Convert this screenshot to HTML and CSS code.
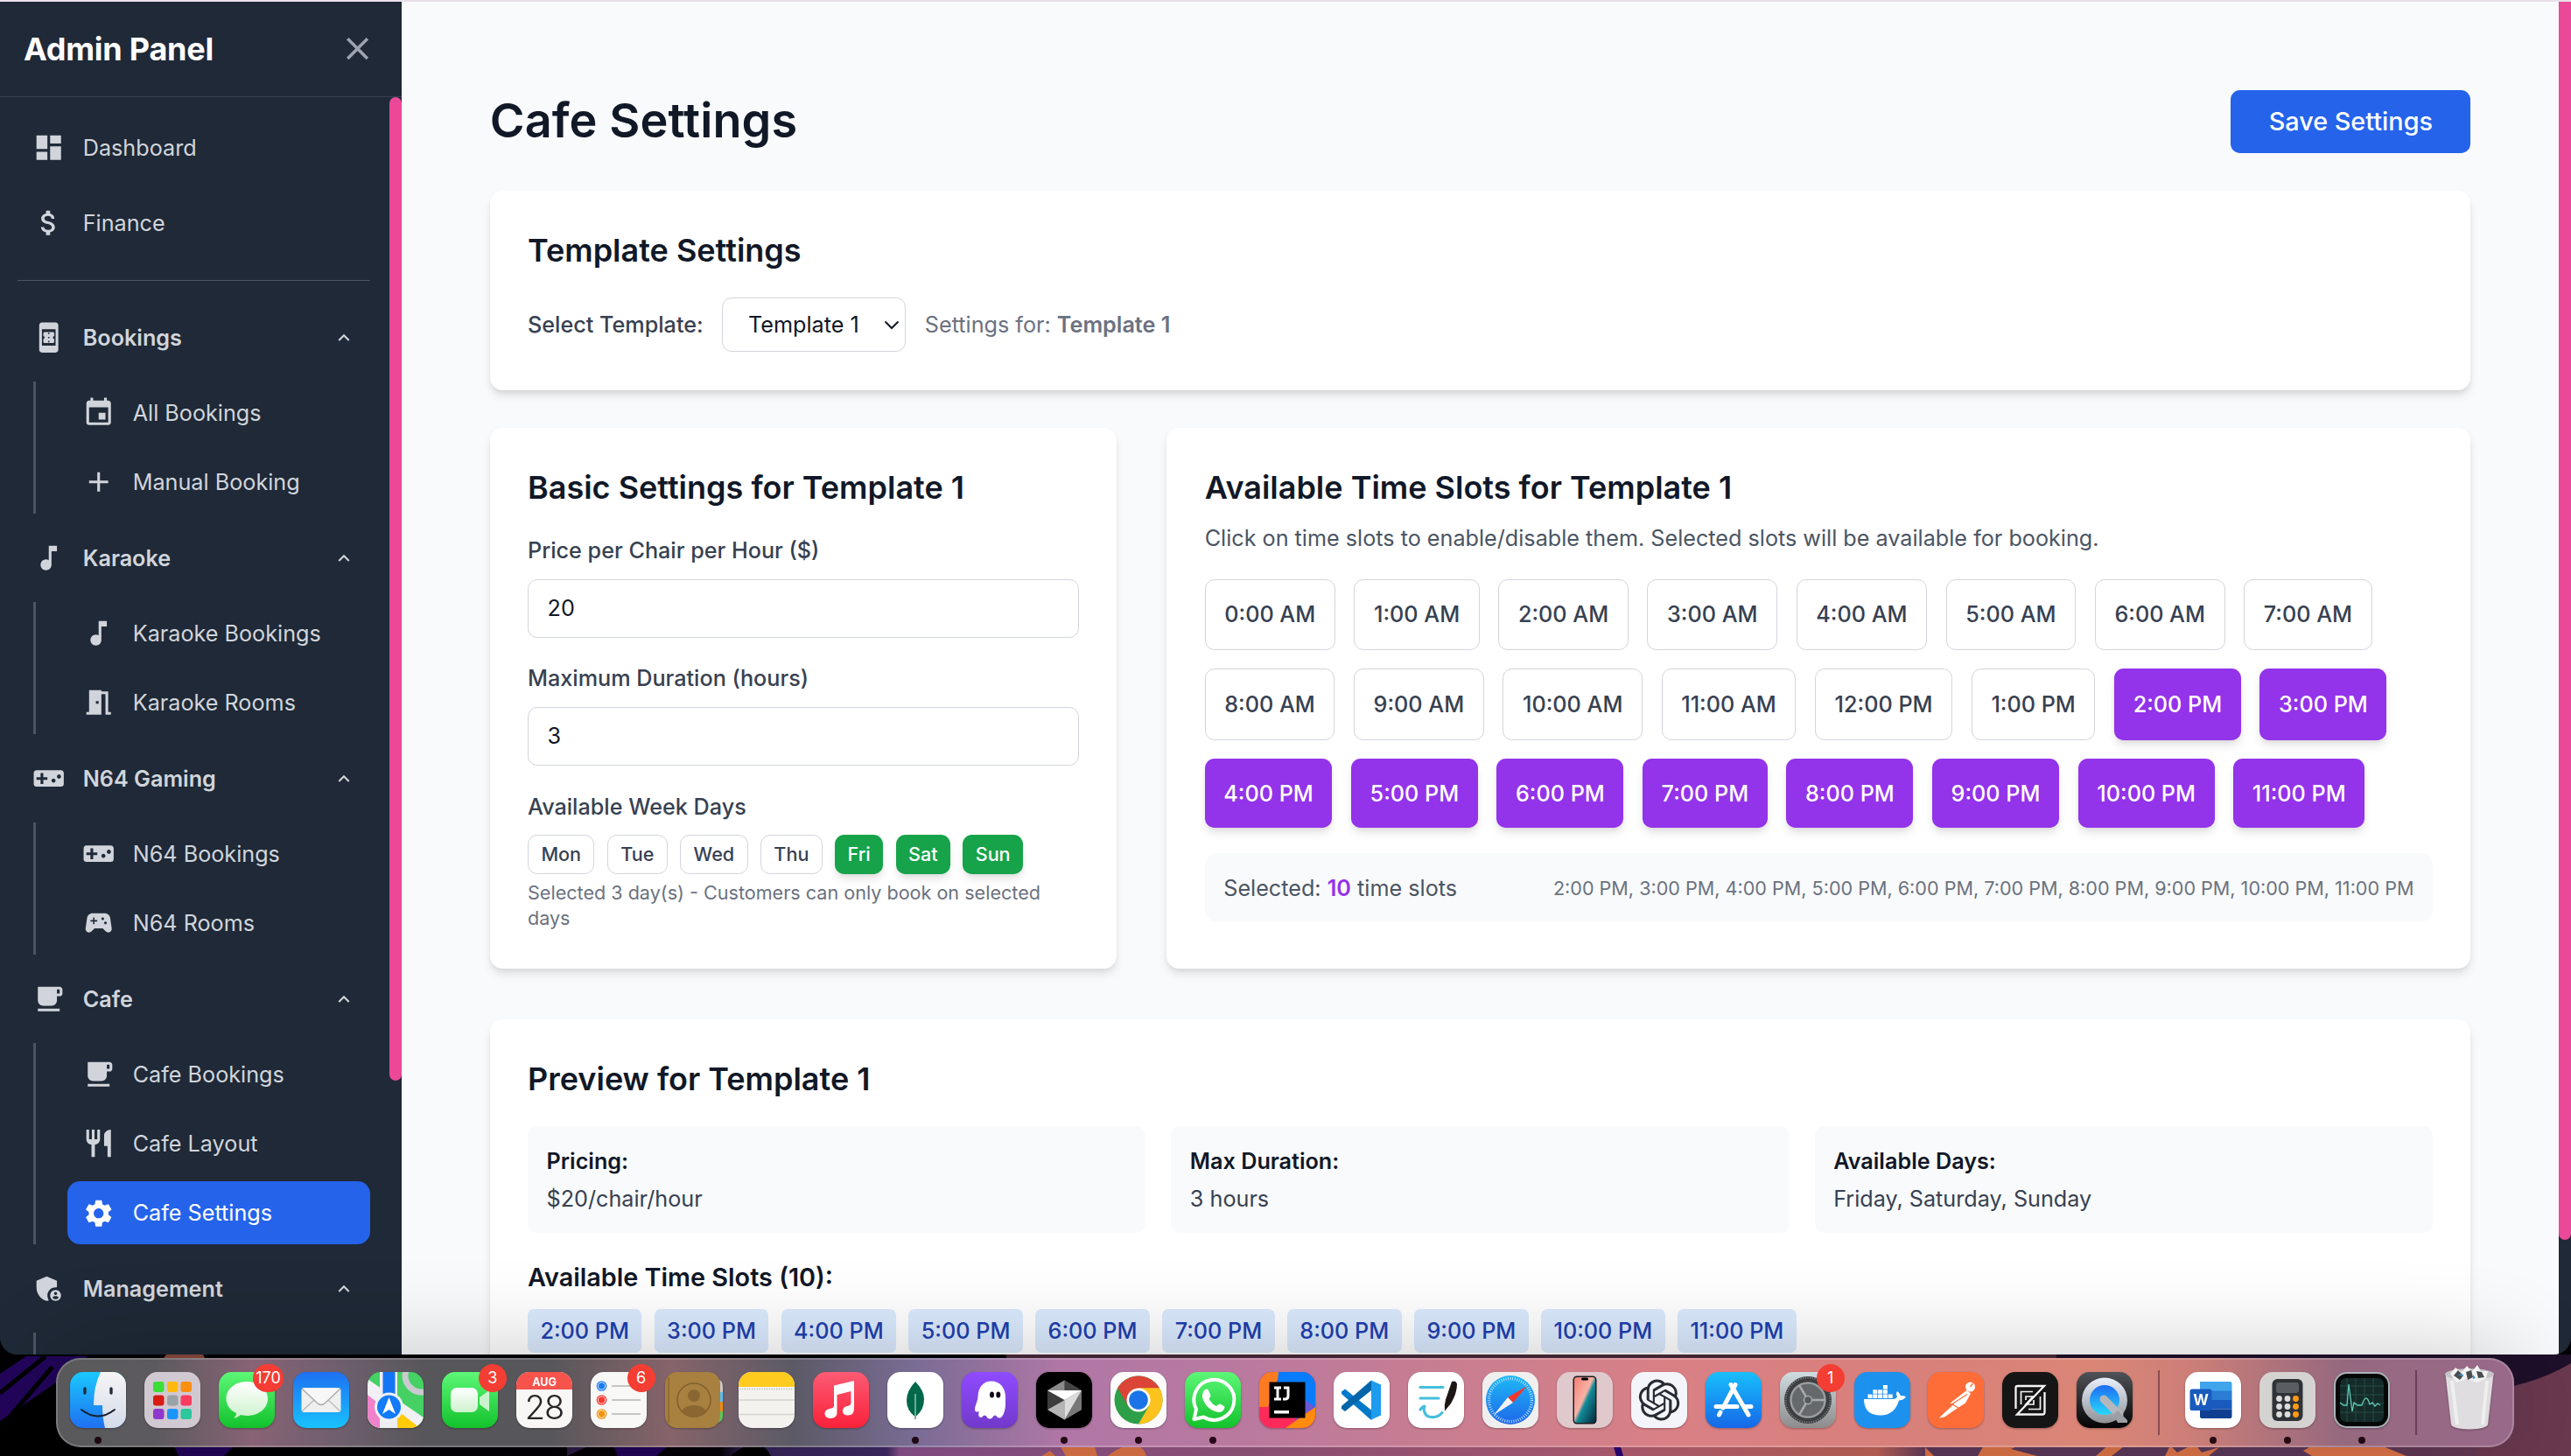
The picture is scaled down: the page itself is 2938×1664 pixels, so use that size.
FILE: index.html
```html
<!DOCTYPE html>
<html lang="en">
<head>
<meta charset="utf-8">
<title>Admin Panel - Cafe Settings</title>
<link rel="stylesheet" href="styles.css">
</head>
<body>
<svg class="defs" width="0" height="0" aria-hidden="true">
  <symbol id="i-dashboard" viewBox="0 0 24 24"><path d="M3 13h8V3H3v10zm0 8h8v-6H3v6zm10 0h8V11h-8v10zm0-18v6h8V3h-8z"/></symbol>
  <symbol id="i-money" viewBox="0 0 24 24"><path d="M11.8 10.9c-2.27-.59-3-1.2-3-2.15 0-1.09 1.01-1.85 2.7-1.85 1.78 0 2.44.85 2.5 2.1h2.21c-.07-1.72-1.12-3.3-3.21-3.81V3h-3v2.16c-1.94.42-3.5 1.68-3.5 3.61 0 2.31 1.91 3.46 4.7 4.13 2.5.6 3 1.48 3 2.41 0 .69-.49 1.79-2.7 1.79-2.06 0-2.87-.92-2.98-2.1h-2.2c.12 2.19 1.76 3.42 3.68 3.83V21h3v-2.15c1.95-.37 3.5-1.5 3.5-3.55 0-2.84-2.43-3.81-4.7-4.4z"/></symbol>
  <symbol id="i-online" viewBox="0 0 24 24"><path d="M17 1H7c-1.1 0-2 .9-2 2v18c0 1.1.9 2 2 2h10c1.1 0 2-.9 2-2V3c0-1.1-.9-2-2-2zM7 18V6h10v12H7zm9-7V9c0-.55-.45-1-1-1H9c-.55 0-.99.45-.99 1v2c.54 0 .99.45.99 1s-.45 1-1 1v2c0 .55.45 1 1 1h6c.55 0 1-.45 1-1v-2c-.55 0-1-.45-1-1s.45-1 1-1zm-3.5 4.5h-1v-1h1v1zm0-3h-1v-1h1v1zm0-3h-1v-1h1v1z"/></symbol>
  <symbol id="i-event" viewBox="0 0 24 24"><path d="M17 12h-5v5h5v-5zM16 1v2H8V1H6v2H5c-1.11 0-1.99.9-1.99 2L3 19c0 1.1.89 2 2 2h14c1.1 0 2-.9 2-2V5c0-1.1-.9-2-2-2h-1V1h-2zm3 18H5V8h14v11z"/></symbol>
  <symbol id="i-add" viewBox="0 0 24 24"><path d="M19 13h-6v6h-2v-6H5v-2h6V5h2v6h6v2z"/></symbol>
  <symbol id="i-note" viewBox="0 0 24 24"><path d="M12 3v10.55c-.59-.34-1.27-.55-2-.55-2.21 0-4 1.79-4 4s1.79 4 4 4 4-1.79 4-4V7h4V3h-6z"/></symbol>
  <symbol id="i-room" viewBox="0 0 24 24"><path d="M14 6v15H3v-2h2V3h9v1h5v15h2v2h-4V6h-3zm-4 5v2h2v-2h-2z"/></symbol>
  <symbol id="i-game" viewBox="0 0 24 24"><path d="M21 6H3c-1.1 0-2 .9-2 2v8c0 1.1.9 2 2 2h18c1.1 0 2-.9 2-2V8c0-1.1-.9-2-2-2zm-10 7H8v3H6v-3H3v-2h3V8h2v3h3v2zm4.5 2c-.83 0-1.5-.67-1.5-1.5s.67-1.5 1.5-1.5 1.5.67 1.5 1.5-.67 1.5-1.5 1.5zm4-3c-.83 0-1.5-.67-1.5-1.5S18.67 9 19.5 9s1.5.67 1.5 1.5-.67 1.5-1.5 1.5z"/></symbol>
  <symbol id="i-esports" viewBox="0 0 24 24"><path d="M21.58 16.09l-1.09-7.66C20.21 6.46 18.52 5 16.53 5H7.47C5.48 5 3.79 6.46 3.51 8.43l-1.09 7.66C2.2 17.63 3.39 19 4.94 19c.68 0 1.32-.27 1.8-.75L9 16h6l2.25 2.25c.48.48 1.13.75 1.8.75 1.56 0 2.75-1.37 2.53-2.91zM11 11H9v2H8v-2H6v-1h2V8h1v2h2v1zm4-1c-.55 0-1-.45-1-1s.45-1 1-1 1 .45 1 1-.45 1-1 1zm2 3c-.55 0-1-.45-1-1s.45-1 1-1 1 .45 1 1-.45 1-1 1z"/></symbol>
  <symbol id="i-cafe" viewBox="0 0 24 24"><path d="M20 3H4v10c0 2.21 1.79 4 4 4h6c2.21 0 4-1.79 4-4v-3h2c1.11 0 2-.89 2-2V5c0-1.11-.89-2-2-2zm0 5h-2V5h2v3zM4 19h16v2H4z"/></symbol>
  <symbol id="i-restaurant" viewBox="0 0 24 24"><path d="M11 9H9V2H7v7H5V2H3v7c0 2.12 1.66 3.84 3.75 3.97V22h2.5v-9.03C11.34 12.84 13 11.12 13 9V2h-2v7zm5-3v8h2.5v8H21V2c-2.76 0-5 2.24-5 4z"/></symbol>
  <symbol id="i-settings" viewBox="0 0 24 24"><path d="M19.14 12.94c.04-.3.06-.61.06-.94 0-.32-.02-.64-.07-.94l2.03-1.58c.18-.14.23-.41.12-.61l-1.92-3.32c-.12-.22-.37-.29-.59-.22l-2.39.96c-.5-.38-1.03-.7-1.62-.94l-.36-2.54c-.04-.24-.24-.41-.48-.41h-3.84c-.24 0-.43.17-.47.41l-.36 2.54c-.59.24-1.13.57-1.62.94l-2.39-.96c-.22-.08-.47 0-.59.22L2.74 8.87c-.12.21-.08.47.12.61l2.03 1.58c-.05.3-.09.63-.09.94s.02.64.07.94l-2.03 1.58c-.18.14-.23.41-.12.61l1.92 3.32c.12.22.37.29.59.22l2.39-.96c.5.38 1.03.7 1.62.94l.36 2.54c.05.24.24.41.48.41h3.84c.24 0 .44-.17.47-.41l.36-2.54c.59-.24 1.13-.56 1.62-.94l2.39.96c.22.08.47 0 .59-.22l1.92-3.32c.12-.22.07-.47-.12-.61l-2.01-1.58zM12 15.6c-1.98 0-3.6-1.62-3.6-3.6s1.62-3.6 3.6-3.6 3.6 1.62 3.6 3.6-1.62 3.6-3.6 3.6z"/></symbol>
  <symbol id="i-admin" viewBox="0 0 24 24"><path d="M17 11c.34 0 .67.04 1 .09V6.27L10.5 3 3 6.27v4.91c0 4.54 3.2 8.79 7.5 9.82.55-.13 1.08-.32 1.6-.55-.69-.98-1.1-2.17-1.1-3.45 0-3.31 2.69-6 6-6z"/><path d="M17 13c-2.21 0-4 1.79-4 4s1.79 4 4 4 4-1.79 4-4-1.79-4-4-4zm0 1.38c.62 0 1.12.51 1.12 1.12s-.51 1.12-1.12 1.12-1.12-.51-1.12-1.12.5-1.12 1.12-1.12zm0 5.37c-.93 0-1.74-.46-2.24-1.17.05-.72 1.51-1.08 2.24-1.08s2.19.36 2.24 1.08c-.5.71-1.31 1.17-2.24 1.17z"/></symbol>
  <symbol id="i-less" viewBox="0 0 24 24"><path d="M12 8l-6 6 1.41 1.41L12 10.83l4.59 4.58L18 14z"/></symbol>
  <symbol id="i-close" viewBox="0 0 24 24"><path d="M19 6.41L17.59 5 12 10.59 6.41 5 5 6.41 10.59 12 5 17.59 6.41 19 12 13.41 17.59 19 19 17.59 13.41 12z"/></symbol>
</svg>

<div class="window">
  <aside class="sidebar">
    <header class="sidebar-head">
      <span class="brand">Admin Panel</span>
      <svg class="close"><use href="#i-close"/></svg>
    </header>
    <div class="sidebar-body">
      <nav class="nav">
        <a class="item top"><svg class="icon"><use href="#i-dashboard"/></svg>Dashboard</a>
        <a class="item top"><svg class="icon"><use href="#i-money"/></svg>Finance</a>
        <hr class="divider">
        <div class="item group-head"><svg class="icon"><use href="#i-online"/></svg>Bookings<svg class="caret"><use href="#i-less"/></svg></div>
        <div class="group">
          <a class="item"><svg class="icon"><use href="#i-event"/></svg>All Bookings</a>
          <a class="item"><svg class="icon"><use href="#i-add"/></svg>Manual Booking</a>
        </div>
        <div class="item group-head"><svg class="icon"><use href="#i-note"/></svg>Karaoke<svg class="caret"><use href="#i-less"/></svg></div>
        <div class="group">
          <a class="item"><svg class="icon"><use href="#i-note"/></svg>Karaoke Bookings</a>
          <a class="item"><svg class="icon"><use href="#i-room"/></svg>Karaoke Rooms</a>
        </div>
        <div class="item group-head"><svg class="icon"><use href="#i-game"/></svg>N64 Gaming<svg class="caret"><use href="#i-less"/></svg></div>
        <div class="group">
          <a class="item"><svg class="icon"><use href="#i-game"/></svg>N64 Bookings</a>
          <a class="item"><svg class="icon"><use href="#i-esports"/></svg>N64 Rooms</a>
        </div>
        <div class="item group-head"><svg class="icon"><use href="#i-cafe"/></svg>Cafe<svg class="caret"><use href="#i-less"/></svg></div>
        <div class="group">
          <a class="item"><svg class="icon"><use href="#i-cafe"/></svg>Cafe Bookings</a>
          <a class="item"><svg class="icon"><use href="#i-restaurant"/></svg>Cafe Layout</a>
          <a class="item active"><svg class="icon"><use href="#i-settings"/></svg>Cafe Settings</a>
        </div>
        <div class="item group-head"><svg class="icon"><use href="#i-admin"/></svg>Management<svg class="caret"><use href="#i-less"/></svg></div>
        <div class="group stub"></div>
      </nav>
      <div class="side-scroll"></div>
    </div>
  </aside>

  <main class="main">
    <div class="page-head">
      <h1>Cafe Settings</h1>
      <button class="save">Save Settings</button>
    </div>

    <section class="card template">
      <h2>Template Settings</h2>
      <div class="template-row">
        <label class="label">Select Template:</label>
        <div class="select">Template 1<svg class="select-arrow" viewBox="0 0 18 11"><path d="M1.5 1.5L9 9l7.500-7.500" fill="none" stroke="#111827" stroke-width="2"/></svg></div>
        <span class="for">Settings for: <b>Template 1</b></span>
      </div>
    </section>

    <div class="columns">
      <section class="card">
        <h2>Basic Settings for Template 1</h2>
        <label class="label field">Price per Chair per Hour ($)</label>
        <input class="input" value="20">
        <label class="label field">Maximum Duration (hours)</label>
        <input class="input" value="3">
        <label class="label field">Available Week Days</label>
        <div class="days">
          <span class="day">Mon</span><span class="day">Tue</span><span class="day">Wed</span><span class="day">Thu</span><span class="day on">Fri</span><span class="day on">Sat</span><span class="day on">Sun</span>
        </div>
        <p class="hint">Selected 3 day(s) - Customers can only book on selected days</p>
      </section>

      <section class="card slots-card">
        <h2>Available Time Slots for Template 1</h2>
        <p class="lead">Click on time slots to enable/disable them. Selected slots will be available for booking.</p>
        <div class="slots">
          <span class="slot">0:00 AM</span><span class="slot">1:00 AM</span><span class="slot">2:00 AM</span><span class="slot">3:00 AM</span><span class="slot">4:00 AM</span><span class="slot">5:00 AM</span><span class="slot">6:00 AM</span><span class="slot">7:00 AM</span>
          <span class="slot">8:00 AM</span><span class="slot">9:00 AM</span><span class="slot">10:00 AM</span><span class="slot">11:00 AM</span><span class="slot">12:00 PM</span><span class="slot">1:00 PM</span><span class="slot on">2:00 PM</span><span class="slot on">3:00 PM</span>
          <span class="slot on">4:00 PM</span><span class="slot on">5:00 PM</span><span class="slot on">6:00 PM</span><span class="slot on">7:00 PM</span><span class="slot on">8:00 PM</span><span class="slot on">9:00 PM</span><span class="slot on">10:00 PM</span><span class="slot on">11:00 PM</span>
        </div>
        <div class="summary">
          <span>Selected: <b>10</b> time slots</span>
          <small>2:00 PM, 3:00 PM, 4:00 PM, 5:00 PM, 6:00 PM, 7:00 PM, 8:00 PM, 9:00 PM, 10:00 PM, 11:00 PM</small>
        </div>
      </section>
    </div>

    <section class="card preview">
      <h2>Preview for Template 1</h2>
      <div class="facts">
        <div class="fact"><b>Pricing:</b><span>$20/chair/hour</span></div>
        <div class="fact"><b>Max Duration:</b><span>3 hours</span></div>
        <div class="fact"><b>Available Days:</b><span>Friday, Saturday, Sunday</span></div>
      </div>
      <h3>Available Time Slots (10):</h3>
      <div class="tags">
        <span>2:00 PM</span><span>3:00 PM</span><span>4:00 PM</span><span>5:00 PM</span><span>6:00 PM</span><span>7:00 PM</span><span>8:00 PM</span><span>9:00 PM</span><span>10:00 PM</span><span>11:00 PM</span>
      </div>
    </section>
  </main>
  <div class="page-scroll"><div class="page-thumb"></div></div>
</div>

<div class="desktop">
  <svg class="wallpaper" viewBox="0 0 2938 132" preserveAspectRatio="none">
    <defs>
      <linearGradient id="wp" x1="0" x2="1" y1="0" y2="0">
        <stop offset="0" stop-color="#000"/><stop offset=".28" stop-color="#050208"/><stop offset=".29" stop-color="#36245a"/><stop offset=".345" stop-color="#3f2a66"/><stop offset=".35" stop-color="#8d5490"/><stop offset=".5" stop-color="#9a587e"/><stop offset=".62" stop-color="#b7617a"/><stop offset=".73" stop-color="#c4665a"/><stop offset=".75" stop-color="#5f3a5c"/><stop offset=".9" stop-color="#5f3a5c"/><stop offset="1" stop-color="#6b3950"/>
      </linearGradient>
    </defs>
    <rect width="2938" height="132" fill="#020104"/>
    <rect y="60" width="2938" height="72" fill="url(#wp)"/>
    <rect x="1150" width="1200" height="60" fill="#4a2a3a"/>
    <path d="M0 38L30 18H100L70 44 0 92Z" fill="#22055a"/>
    <path d="M0 60L52 18M0 100L60 30" stroke="#020104" stroke-width="5"/>
    <path d="M184 24l6-8h42l4 8Z" fill="#8b4a3d"/>
    <path d="M198 118h72l-14 14h-52Z" fill="#22055a"/>
    <path d="M648 118h30l-30 14Z" fill="#2c1b45"/><path d="M700 118h66l-16 14h-44Z" fill="#22055a"/>
    <path d="M835 132q15-14 34-14 8 6 12 14Z" fill="#000"/>
    <path d="M1190 132l10-6 6 6h12l-8-14h40l4 14h12q16-14 34-12 8 4 10 12Z" fill="#e2774a"/>
    <path d="M1843 118h8l4 14h-8Z" fill="#2b0578"/>
    <path d="M2200 122l10 10h-10ZM2260 132l8-14h44l-14 6 30 8ZM2395 132l16-14h20l-18 14ZM2474 132l6-12 8 8 20-10 8 10 20-6-12 10ZM2632 126l14-8h70l34 14h-108Z" fill="#e2774a"/>
    <path d="M2350 16h588v40q-60 10-100 0-300 0-488-20Z" fill="#1e0f2a"/>
    <path d="M2830 58q60-4 108-32v106h-108Z" fill="#6b3950"/>
  </svg>
  <div class="dock">
    <div class="app running">
      <svg viewBox="0 0 64 64"><defs><linearGradient id="g1" x2="0" y2="1"><stop stop-color="#1ac8fd"/><stop offset="1" stop-color="#1f70f2"/></linearGradient><linearGradient id="g2" x2="0" y2="1"><stop stop-color="#f6f5f6"/><stop offset="1" stop-color="#d3dbe8"/></linearGradient></defs><rect width="64" height="64" rx="15" fill="url(#g1)"/><path d="M35 0h14a15 15 0 0 1 15 15v34a15 15 0 0 1-15 15h-9q-3-12-3-26H27Q27 16 35 0Z" fill="url(#g2)"/><path d="M17 19v5M47 19v5" stroke="#1e2d3c" stroke-width="3.400" stroke-linecap="round"/><path d="M13 43q19 15 38 0" fill="none" stroke="#14202c" stroke-width="2" stroke-linecap="round"/></svg>
    </div>
    <div class="app">
      <svg viewBox="0 0 64 64"><rect width="64" height="64" rx="15" fill="#d1c9d1"/><g><rect x="10" y="11" width="12.500" height="12" rx="3" fill="#3bdf37"/><rect x="26" y="11" width="12.500" height="12" rx="3" fill="#ffb90e"/><rect x="41.500" y="11" width="12.500" height="12" rx="3" fill="#fa8f14"/><rect x="10" y="26.500" width="12.500" height="12" rx="3" fill="#d81c14"/><rect x="26" y="26.500" width="12.500" height="12" rx="3" fill="#9aa2a6"/><rect x="41.500" y="26.500" width="12.500" height="12" rx="3" fill="#fc3c5e"/><rect x="10" y="42" width="12.500" height="12" rx="3" fill="#9038cc"/><rect x="26" y="42" width="12.500" height="12" rx="3" fill="#1b95fb"/><rect x="41.500" y="42" width="12.500" height="12" rx="3" fill="#2cc79c"/></g></svg>
    </div>
    <div class="app">
      <svg viewBox="0 0 64 64"><defs><linearGradient id="g3" x2="0" y2="1"><stop stop-color="#5df777"/><stop offset="1" stop-color="#12c22c"/></linearGradient><linearGradient id="g4" x2="0" y2="1"><stop stop-color="#fff"/><stop offset="1" stop-color="#cdf2cd"/></linearGradient></defs><rect width="64" height="64" rx="15" fill="url(#g3)"/><path d="M32 11c13.500 0 24 8.500 24 19.500S45.500 50 32 50c-2.500 0-5-.3-7-.9-2 2-5 3.500-8 3.400 2-1.500 3-3.500 3-5.500C12.500 43.500 8.500 37.500 8.500 30.500 8.500 19.500 18.500 11 32 11Z" fill="url(#g4)"/></svg>
      <span class="badge">170</span>
    </div>
    <div class="app">
      <svg viewBox="0 0 64 64"><defs><linearGradient id="g5" x2="0" y2="1"><stop stop-color="#1e70f2"/><stop offset="1" stop-color="#19c2fd"/></linearGradient></defs><rect width="64" height="64" rx="15" fill="url(#g5)"/><rect x="9.500" y="18" width="45" height="28" rx="3" fill="#efefef"/><path d="M10 45l15-14M54 45L39 31" stroke="#b9b9b9" stroke-width="1.200"/><path d="M10 19l17 16q5 5 10 0l17-16" fill="#f7f7f7" stroke="#a9a9a9" stroke-width="1.300"/></svg>
    </div>
    <div class="app">
      <svg viewBox="0 0 64 64"><defs><clipPath id="c1"><rect width="64" height="64" rx="15"/></clipPath></defs><g clip-path="url(#c1)"><rect width="64" height="64" fill="#45d163"/><path d="M0 8l64 44v12H0Z" fill="#f1f0f4"/><path d="M0 26l20 16v22H0Z" fill="#ef82cb"/><path d="M34 44l26 20H34Z" fill="#fecb08"/><rect x="14" y="0" width="20" height="64" fill="#eeedf2"/><rect x="17.500" y="0" width="14" height="34" fill="#1275f5"/><circle cx="62" cy="4" r="19" fill="none" stroke="#c9c9cf" stroke-width="7"/></g><circle cx="24.500" cy="40" r="16.500" fill="#eef0f4"/><circle cx="24.500" cy="40" r="13.500" fill="#127bf7"/><path d="M24.500 29l7.500 19-7.500-5-7.500 5Z" fill="#fff"/></svg>
    </div>
    <div class="app">
      <svg viewBox="0 0 64 64"><rect width="64" height="64" rx="15" fill="url(#g3)"/><rect x="10" y="18" width="31" height="28" rx="7" fill="url(#g4)"/><path d="M43 29l11-8v24l-11-8Z" fill="#c9f3cd"/></svg>
      <span class="badge">3</span>
    </div>
    <div class="app">
      <svg viewBox="0 0 64 64"><rect width="64" height="64" rx="15" fill="#f8f7f5"/><path d="M0 20v-5A15 15 0 0 1 15 0h34a15 15 0 0 1 15 15v5Z" fill="#f6534d"/><text x="32" y="15.500" text-anchor="middle" font-size="12.500" font-weight="700" fill="#fff">AUG</text><text x="32" y="54" text-anchor="middle" font-size="38" font-weight="300" letter-spacing="-1" fill="#262626">28</text></svg>
    </div>
    <div class="app">
      <svg viewBox="0 0 64 64"><rect width="64" height="64" rx="15" fill="#f8f8f6"/><path d="M24 16h33M24 32h33M24 48h33" stroke="#c6c6c8" stroke-width="1.800"/><g stroke-width="1.300" fill="none"><circle cx="12.500" cy="16" r="5.200" stroke="#1a7df5"/><circle cx="12.500" cy="32" r="5.200" stroke="#f53a33"/><circle cx="12.500" cy="48" r="5.200" stroke="#f4940c"/></g><circle cx="12.500" cy="16" r="3.700" fill="#1a7df5"/><circle cx="12.500" cy="32" r="3.700" fill="#f53a33"/><circle cx="12.500" cy="48" r="3.700" fill="#f4940c"/></svg>
      <span class="badge">6</span>
    </div>
    <div class="app">
      <svg viewBox="0 0 64 64"><path d="M58 9h4q4 2 4 8v6h-8Z" fill="#c9c9c9"/><path d="M58 23h8v11h-8Z" fill="#5bbdf2"/><path d="M58 34h8v11h-8Z" fill="#f08a16"/><path d="M58 45h8v6q0 5-6 7Z" fill="#58c95c"/><rect width="63" height="64" rx="14" fill="#a8803f"/><path d="M4 6v52" stroke="#8c682f" stroke-width="1.500"/><circle cx="33" cy="32" r="19" fill="none" stroke="#7f5f2c" stroke-width="1.500"/><circle cx="33" cy="27" r="7" fill="#8a6631"/><path d="M19 44q5-6 14-6t14 6q-6 8-14 8t-14-8Z" fill="#8a6631"/></svg>
    </div>
    <div class="app">
      <svg viewBox="0 0 64 64"><rect width="64" height="64" rx="15" fill="#f3f2ef"/><path d="M0 17v-2A15 15 0 0 1 15 0h34a15 15 0 0 1 15 15v2Z" fill="#ffcb1f"/><path d="M0 32h64M0 48.500h64" stroke="#d4d3d0" stroke-width="1.500"/><path d="M1 19.500h62" stroke="#b9b8b4" stroke-width="1.500" stroke-dasharray="1.200 1.600"/></svg>
    </div>
    <div class="app">
      <svg viewBox="0 0 64 64"><defs><linearGradient id="g6" x2="0" y2="1"><stop stop-color="#fc5b74"/><stop offset="1" stop-color="#fa2139"/></linearGradient></defs><rect width="64" height="64" rx="15" fill="url(#g6)"/><path d="M24 15.500L47 10v31.500q0 8-7 8-6 0-6-5 0-4.500 5-5.500 4.500-.6 4.500-3.500V22l-16 4v20.500q0 6.500-7.500 6.500-6.500-.5-6.500-5.500 0-4.500 5.500-5.500 5-1 5-3.500Z" fill="#fff"/></svg>
    </div>
    <div class="app running">
      <svg viewBox="0 0 64 64"><rect width="64" height="64" rx="15" fill="#fff"/><path d="M32 11q10 10 10 20 0 12-9 19.500l-.5 3.500h-1l-.5-3.500q-9-7-9-18 0-11 10-21.500Z" fill="#00684a"/><path d="M32 25v28" stroke="#9fc8b6" stroke-width="1.400"/></svg>
    </div>
    <div class="app">
      <svg viewBox="0 0 64 64"><defs><linearGradient id="g7" x2="0" y2="1"><stop stop-color="#8f4bff"/><stop offset="1" stop-color="#7239cb"/></linearGradient></defs><rect width="64" height="64" rx="15" fill="url(#g7)"/><path d="M34 10.500c10 0 16 8 16 18v8c0 8-3 16-7 16-3 0-3-3-5-3s-2.500 4-6 4-3-4-6-4c-2 0-2 2.500-4 2.500-3.500 0-3-5-2-7-2 1-5 1-5-2 0-5 3-8 3.500-15C19 18 24 10.500 34 10.500Z" fill="#fff"/><ellipse cx="34.500" cy="26" rx="2.500" ry="3.600" fill="#0d0717"/><ellipse cx="41.800" cy="26" rx="2.500" ry="3.600" fill="#0d0717"/></svg>
    </div>
    <div class="app running">
      <svg viewBox="0 0 64 64"><rect width="64" height="64" rx="15" fill="#000"/><path d="M32.500 9.500L52 21v22L32.500 54.500 13 43V21Z" fill="#666"/><path d="M32.500 9.500V21H13Z" fill="#8a8a8a"/><path d="M32.500 9.500V21H52Z" fill="#444"/><path d="M13 43l19.500-11v22.500Z" fill="#b5b5b5"/><path d="M52 21v22L32.500 54.500Z" fill="#777"/><path d="M13 21v22l19.500-11Z" fill="#3d3d3d"/><path d="M13 21h39L32.500 32Z" fill="#fff"/><path d="M32.500 32v22.500L52 21Z" fill="#dcdcdc"/></svg>
    </div>
    <div class="app running">
      <svg viewBox="0 0 64 64"><rect width="64" height="64" rx="15" fill="#fcfafb"/><circle cx="32" cy="32" r="27.500" fill="#2c9f48"/><path d="M8.200 18.200A27.500 27.500 0 0 1 55.800 18.200L32 32 20.100 38.900Z" fill="#db4437"/><path d="M55.800 18.200A27.500 27.500 0 0 1 32 59.500L43.900 38.900 32 18.200Z" fill="#fcc31e"/><circle cx="32" cy="32" r="13.500" fill="#fff"/><circle cx="32" cy="32" r="10.800" fill="#1b73e8"/></svg>
    </div>
    <div class="app running">
      <svg viewBox="0 0 64 64"><rect width="64" height="64" rx="15" fill="url(#g3)"/><path d="M10.500 54l2.500-11.500A23 23 0 1 1 21.500 51.500Z" fill="none" stroke="#fff" stroke-width="4" stroke-linejoin="round"/><path d="M22.500 20.500q3-2 4.500.5l2.500 5.500q.5 1.500-2 4 3 6 8.500 8.500 2.500-3 4-2.500l5 2.500q1 1 0 3-2 4.500-7 4-14-3-18-17-.5-5 2.500-8.500Z" fill="#fff"/></svg>
    </div>
    <div class="app">
      <svg viewBox="0 0 64 64"><defs><clipPath id="c2"><rect width="64" height="64" rx="15"/></clipPath></defs><g clip-path="url(#c2)"><rect width="64" height="64" fill="#fe2a5a"/><path d="M0 0h24L10 40H0Z" fill="#fc7b21"/><path d="M22 0h42v44L20 20Z" fill="#087cfa"/><path d="M64 40L30 64h34Z" fill="#fe8b0e"/><path d="M50 30l14 10-24 16Z" fill="#6b57d2"/></g><rect x="11.500" y="11.500" width="41" height="41" fill="#000"/><g fill="none" stroke="#fff" stroke-width="3"><path d="M17 18h8M17 31h8M21 18v13M28 18h6M33 17v10.500q0 3.500-3.500 3.500H27"/></g><rect x="17" y="44" width="17" height="3.500" fill="#fff"/></svg>
    </div>
    <div class="app">
      <svg viewBox="0 0 64 64"><rect width="64" height="64" rx="15" fill="#fff"/><path d="M9 22.500l4-3 30 24V55L9 25Z" fill="#0179cb"/><path d="M9 42l4 3 30-24V9.500L9 39Z" fill="#0165a9"/><path d="M43 9.500l11 5v35l-11 5Z" fill="#1e9cf0"/></svg>
    </div>
    <div class="app">
      <svg viewBox="0 0 64 64"><rect width="64" height="64" rx="15" fill="#fff"/><g fill="none" stroke="#45bfdd" stroke-width="3.200" stroke-linecap="round"><path d="M14 17.500h26M14 30h21M14 43q3-4 4.500-4 1 1-.5 3 1 9 8 9.500 8 1 13-5"/></g><path d="M50 11q5-2 6 3 0 10-7 22l-7 8.500q-1-6 1-13Z" fill="#1d1614"/></svg>
    </div>
    <div class="app">
      <svg viewBox="0 0 64 64"><defs><linearGradient id="g8" x2="0" y2="1"><stop stop-color="#1db9f7"/><stop offset="1" stop-color="#1e66e8"/></linearGradient></defs><rect width="64" height="64" rx="15" fill="#f0eff0"/><circle cx="32" cy="32" r="28" fill="url(#g8)"/><circle cx="32" cy="32" r="24.500" fill="none" stroke="#b9e0fb" stroke-width="3.500" stroke-dasharray=".9 1.700"/><path d="M51 16L29 29l6 6Z" fill="#f4362c"/><path d="M13 49l16-20 6 6Z" fill="#f3f3f3"/></svg>
    </div>
    <div class="app">
      <svg viewBox="0 0 64 64"><defs><linearGradient id="g9" x2="1" y2="1"><stop stop-color="#f57f78"/><stop offset=".45" stop-color="#f7b3a5"/><stop offset=".55" stop-color="#128a98"/><stop offset="1" stop-color="#06283a"/></linearGradient></defs><rect width="64" height="64" rx="15" fill="#dfc9cd"/><rect x="18.500" y="4.500" width="27" height="55" rx="4.500" fill="#1c1c1e"/><rect x="20" y="6" width="24" height="52" rx="3" fill="url(#g9)"/><rect x="28" y="6.500" width="8" height="3" rx="1.500" fill="#000"/></svg>
    </div>
    <div class="app">
      <svg viewBox="0 0 64 64"><rect width="64" height="64" rx="15" fill="#f3f5fa"/><path transform="translate(8.500 8.500) scale(1.960)" d="M22.282 9.821a5.985 5.985 0 0 0-.516-4.910 6.046 6.046 0 0 0-6.510-2.900A6.065 6.065 0 0 0 4.981 4.180a5.985 5.985 0 0 0-3.998 2.900 6.046 6.046 0 0 0 .743 7.097 5.980 5.980 0 0 0 .510 4.911 6.051 6.051 0 0 0 6.515 2.900A5.985 5.985 0 0 0 13.260 24a6.056 6.056 0 0 0 5.772-4.206 5.990 5.990 0 0 0 3.998-2.900 6.056 6.056 0 0 0-.747-7.073zM13.260 22.430a4.476 4.476 0 0 1-2.876-1.040l.141-.081 4.779-2.758a.795.795 0 0 0 .392-.681v-6.737l2.020 1.168a.071.071 0 0 1 .038.052v5.583a4.504 4.504 0 0 1-4.494 4.494zM3.600 18.304a4.470 4.470 0 0 1-.535-3.014l.142.085 4.783 2.759a.771.771 0 0 0 .780 0l5.843-3.369v2.332a.080.080 0 0 1-.033.062L9.740 19.950a4.500 4.500 0 0 1-6.140-1.646zM2.340 7.896a4.485 4.485 0 0 1 2.366-1.973V11.600a.766.766 0 0 0 .388.676l5.815 3.355-2.020 1.168a.076.076 0 0 1-.071 0l-4.830-2.786A4.504 4.504 0 0 1 2.340 7.872zm16.597 3.855l-5.833-3.387L15.119 7.200a.076.076 0 0 1 .071 0l4.830 2.791a4.494 4.494 0 0 1-.676 8.105v-5.678a.790.790 0 0 0-.407-.667zm2.010-3.023l-.141-.085-4.774-2.782a.776.776 0 0 0-.785 0L9.409 9.230V6.897a.066.066 0 0 1 .028-.061l4.830-2.787a4.500 4.500 0 0 1 6.680 4.660zm-12.640 4.135l-2.020-1.164a.080.080 0 0 1-.038-.057V6.075a4.500 4.500 0 0 1 7.375-3.453l-.142.080L8.704 5.460a.795.795 0 0 0-.393.681zm1.097-2.365l2.602-1.500 2.607 1.500v2.999l-2.597 1.500-2.607-1.500z" fill="#262b33"/></svg>
    </div>
    <div class="app">
      <svg viewBox="0 0 64 64"><defs><linearGradient id="g10" x2="0" y2="1"><stop stop-color="#18bffb"/><stop offset="1" stop-color="#1668e8"/></linearGradient></defs><rect width="64" height="64" rx="15" fill="url(#g10)"/><g stroke="#fff" stroke-width="5" stroke-linecap="round"><path d="M34 14.500L20 41M29 14.500L49 49M12 39.500h24M45 39.500h7M17 46l-1.500 3"/></g></svg>
    </div>
    <div class="app">
      <svg viewBox="0 0 64 64"><defs><linearGradient id="g11" x2="0" y2="1"><stop stop-color="#cfdde2"/><stop offset="1" stop-color="#8d8b8c"/></linearGradient></defs><rect width="64" height="64" rx="15" fill="url(#g11)"/><circle cx="32" cy="32" r="27" fill="#3c3e40"/><circle cx="32" cy="32" r="25.500" fill="none" stroke="#77797b" stroke-width="2" stroke-dasharray="1.200 1.500"/><circle cx="32" cy="32" r="19.500" fill="#66696b" stroke="#9a9da0" stroke-width="2.500"/><path d="M32 32h20M32 32L22 15M32 32L22 49" stroke="#a6a9ab" stroke-width="2.500"/><circle cx="32" cy="32" r="4.500" fill="#55585a" stroke="#a6a9ab" stroke-width="1.500"/></svg>
      <span class="badge">1</span>
    </div>
    <div class="app">
      <svg viewBox="0 0 64 64"><rect width="64" height="64" rx="15" fill="#1d91ee"/><path d="M11 31h33q4 0 5-3-2-3 0-6 3 2 4 5 3 0 6 1-2 4-8 4.500Q46 49.500 30 49.500 11 49.500 11 31Z" fill="#fff"/><g fill="#fff"><rect x="15.500" y="25.500" width="5" height="4.500"/><rect x="21.300" y="25.500" width="5" height="4.500"/><rect x="27.100" y="25.500" width="5" height="4.500"/><rect x="32.900" y="25.500" width="5" height="4.500"/><rect x="38.700" y="25.500" width="5" height="4.500"/><rect x="21.300" y="20.300" width="5" height="4.500"/><rect x="27.100" y="20.300" width="5" height="4.500"/><rect x="32.900" y="20.300" width="5" height="4.500"/><rect x="32.900" y="15" width="5" height="4.500"/></g></svg>
    </div>
    <div class="app">
      <svg viewBox="0 0 64 64"><rect width="64" height="64" rx="15" fill="#fe6d37"/><circle cx="48.500" cy="17" r="5.500" fill="#fff"/><path d="M44 21l5 3.500-6 11-11 7-13 9-6 1 5-5 11-10Z" fill="#fff"/><path d="M42 22L24 36l4 .5 17-11" fill="#fff" stroke="#fe6d37" stroke-width="1.200"/><path d="M28 37l7 4M48.500 17l3-4" stroke="#fe6d37" stroke-width="1.300"/></svg>
    </div>
    <div class="app">
      <svg viewBox="0 0 64 64"><rect width="64" height="64" rx="15" fill="#151515"/><g fill="none" stroke="#f4f4f4" stroke-width="2.300"><path d="M15.500 42V18q0-2 2-2H48L17 48.500h29q2.500 0 2.500-2.500V23"/><path d="M21.500 37V22.500H35M43.500 28v14.500H30M27 32v-4h8l-8 9h9v-5" stroke-width="1.700"/></g></svg>
    </div>
    <div class="app">
      <svg viewBox="0 0 64 64"><defs><linearGradient id="g12" x2="0" y2="1"><stop stop-color="#4f5257"/><stop offset="1" stop-color="#050506"/></linearGradient><linearGradient id="g13" x2="0" y2="1"><stop stop-color="#e9effc"/><stop offset="1" stop-color="#8f9296"/></linearGradient><linearGradient id="g14" x2="0" y2="1"><stop stop-color="#1d6cf0"/><stop offset="1" stop-color="#28d9fd"/></linearGradient></defs><rect width="64" height="64" rx="15" fill="url(#g12)"/><circle cx="32" cy="32.500" r="26" fill="url(#g13)"/><circle cx="32" cy="32" r="17" fill="url(#g14)"/><path d="M31 31l18 18" stroke="#b4b7bb" stroke-width="9" stroke-linecap="round"/><path d="M42 49l5-5 11 11v3H47Z" fill="#9c9fa3"/></svg>
    </div>
    <i class="sep"></i>
    <div class="app running">
      <svg viewBox="0 0 64 64"><rect width="64" height="64" rx="15" fill="#fff"/><path d="M17 11h34.500q2 0 2 2v9H17Z" fill="#41a5ee"/><path d="M17 21.500h36.500V32H17Z" fill="#2b7cd3"/><path d="M17 32h36.500v10.500H17Z" fill="#185abd"/><path d="M17 42.500h36.500V51q0 2-2 2H19q-2 0-2-2Z" fill="#103f91"/><rect x="5.500" y="19.500" width="25" height="24.500" rx="2.500" fill="#185abd"/><text x="18" y="38" text-anchor="middle" font-size="17" font-weight="700" fill="#fff">W</text></svg>
    </div>
    <div class="app running">
      <svg viewBox="0 0 64 64"><rect width="64" height="64" rx="15" fill="#d5d3d1"/><rect x="14.500" y="8" width="35" height="48" rx="6" fill="#2f3236"/><rect x="19" y="12" width="26" height="12" rx="3" fill="#5a5d61"/><g fill="#dcdcdc"><circle cx="22.500" cy="30.500" r="3.400"/><circle cx="32" cy="30.500" r="3.400"/><circle cx="22.500" cy="39.500" r="3.400"/><circle cx="32" cy="39.500" r="3.400"/><circle cx="22.500" cy="48.500" r="3.400"/><circle cx="32" cy="48.500" r="3.400"/></g><g fill="#ff9a10"><circle cx="41.500" cy="30.500" r="3.400"/><circle cx="41.500" cy="39.500" r="3.400"/><circle cx="41.500" cy="48.500" r="3.400"/></g></svg>
    </div>
    <div class="app running">
      <svg viewBox="0 0 64 64"><rect width="64" height="64" rx="15" fill="#a9b4ba"/><rect x="2" y="2" width="60" height="60" rx="13" fill="#060808"/><rect x="7" y="7" width="50" height="50" rx="7" fill="#142b29"/><path d="M15 7v50M25 7v50M35 7v50M45 7v50M7 16h50M7 26h50M7 36h50M7 46h50" stroke="#264a45" stroke-width="1"/><path d="M7 35l4 3h4l2-24 4 31 2-10 4 3h5q3-9 5-8 2 0 4 7l3-2 3 4 3-3 3 2" fill="none" stroke="#5fc9b5" stroke-width="1.300"/></svg>
    </div>
    <i class="sep last"></i>
    <div class="app">
      <svg viewBox="0 0 64 72"><g transform="translate(0 2)"><path d="M4.500 6q27.500 8 55 0L53 64q-2 5-21 5.500Q13 69 11 64Z" fill="#dfdddf"/><path d="M12 14l6 50M52 14l-5 50" stroke="#efeff0" stroke-width="4"/><ellipse cx="32" cy="6.500" rx="28" ry="6.500" fill="#c5c3c6"/><path d="M10 6l6-7 7 5 6-7 6 6 6-7 4 7 8 0-2 8-10 5-12-4-12 4Z" fill="#f2f2f2"/><path d="M14 8l5-6 6 6-4 5ZM28 4l6-2 2 8-6 3ZM40 3l6 1 3 6-7 1Z" fill="#4a4c50"/><path d="M19 7l5-1v3ZM36 7l3 4-3 1Z" fill="#2f9bd8"/></g></svg>
    </div>
  </div>
</div>
</body>
</html>
```

FILE: styles.css
```css
/* The interface is shown at 180% scale, so 1rem = 16 * 1.8px */
html { font-size: 28.8px; }
* { box-sizing: border-box; }
body {
  margin: 0;
  width: 2938px;
  height: 1664px;
  overflow: hidden;
  background: #000;
  color: #111827;
  font-family: Inter, "Liberation Sans", sans-serif;
  font-size: 0.875rem;
  line-height: 1.25rem;
  display: flex;
  flex-direction: column;
}
h1, h2, h3, p { margin: 0; }
.defs { display: none; }

.window {
  flex: none;
  height: 1548px;
  display: flex;
  overflow: hidden;
  border-top: 2px solid #e9e0ea;
  border-radius: 0 0 20px 20px;
  background: #1f2937;
}

/* Sidebar */
.sidebar {
  flex: none;
  width: 459px;
  display: flex;
  flex-direction: column;
  background: #1f2937;
  color: #d1d5db;
}
.sidebar-head {
  flex: none;
  height: 109px;
  padding: 0 29px 0 27px;
  display: flex;
  align-items: center;
  justify-content: space-between;
  border-bottom: 1px solid #374151;
}
.brand { color: #fff; font-size: 1.25rem; font-weight: 700; letter-spacing: -0.25px; }
.close { width: 43.200px; height: 43.200px; fill: #9ca3af; }
.sidebar-body {
  flex: 1;
  min-height: 0;
  display: flex;
  justify-content: space-between;
}
.nav {
  width: 423px;
  padding: 0.5rem 0 0 20px;
  overflow: hidden;
}
.side-scroll {
  width: 14px;
  height: 1124px;
  border-radius: 7px;
  background: #ec4899;
}
.item {
  height: 2.5rem;
  padding: 0 0.600rem;
  display: flex;
  align-items: center;
  gap: 20px;
  border-radius: 0.5rem;
  white-space: nowrap;
}
.item.top { height: 3rem; }
.icon { flex: none; width: 1.300rem; height: 1.300rem; fill: currentColor; }
.divider {
  height: 1px;
  margin: 0.750rem 0 0.5rem;
  border: 0;
  background: #4b5563;
}
.group-head { height: 3.500rem; font-weight: 600; }
.caret { width: 26px; height: 26px; margin-left: auto; fill: currentColor; }
.group {
  margin-left: 18px;
  padding-left: 36px;
  border-left: 3px solid #4b5563;
  display: flex;
  flex-direction: column;
  gap: 0.250rem;
}
.group.stub { height: 80px; }
.item.active { background: #2563eb; color: #fff; }

/* Main column */
.main {
  flex: 1;
  min-width: 0;
  padding: 3.500rem 3.500rem 0;
  overflow: hidden;
  background: #f9fafb;
}
.page-scroll { flex: none; width: 14px; background: #1f2937; }
.page-thumb { height: 1415px; border-radius: 0 0 7px 7px; background: #ec4899; }
.page-head {
  height: 2.500rem;
  margin-bottom: 1.500rem;
  display: flex;
  align-items: center;
  justify-content: space-between;
}
h1 { font-size: 1.875rem; line-height: 2.250rem; font-weight: 600; letter-spacing: 0.1px; }
.save {
  height: 2.500rem;
  padding: 0 1.500rem;
  border: 0;
  border-radius: 0.375rem;
  background: #2563eb;
  color: #fff;
  font: 500 1rem/1.500rem Inter, "Liberation Sans", sans-serif;
}
.card {
  padding: 1.500rem;
  border-radius: 0.5rem;
  background: #fff;
  box-shadow: 0 7.200px 10.800px -1.800px rgba(0, 0, 0, .1), 0 3.600px 7.200px -3.600px rgba(0, 0, 0, .1);
}
h2 { margin-bottom: 1rem; font-size: 1.250rem; line-height: 1.750rem; font-weight: 600; }
h3 { margin: 1rem 0 0.500rem; font-size: 1rem; line-height: 1.500rem; font-weight: 600; }
.label { color: #374151; font-weight: 500; }
.template { margin-bottom: 1.500rem; }
.template-row { display: flex; align-items: center; gap: 0.750rem; }
.select {
  width: 210px;
  height: 62px;
  padding: 0 6px 0 1rem;
  display: flex;
  align-items: center;
  justify-content: space-between;
  border: 1px solid #d1d5db;
  border-radius: 0.375rem;
}
.select-arrow { width: 18px; height: 11px; }
.for { color: #6b7280; }
.for b { font-weight: 600; }

.columns {
  display: grid;
  grid-template-columns: repeat(3, 1fr);
  gap: 2rem;
  margin-bottom: 2rem;
}
.slots-card { grid-column: span 2; }
.field { display: block; margin-bottom: 0.500rem; }
.input {
  display: block;
  width: 100%;
  height: 67px;
  margin-bottom: 1rem;
  padding: 0 0.750rem;
  border: 1px solid #d1d5db;
  border-radius: 0.375rem;
  background: #fff;
  color: #111827;
  font: 400 0.875rem/1.250rem Inter, "Liberation Sans", sans-serif;
}
.days { display: flex; gap: 0.500rem; font-size: 0.750rem; line-height: 1rem; font-weight: 500; color: #374151; }
.day { padding: 0.250rem 0.500rem; border: 1px solid #d1d5db; border-radius: 0.375rem; }
.slots { display: flex; flex-wrap: wrap; gap: 0.750rem; font-weight: 500; color: #374151; }
.slot { padding: 0.750rem; border: 1px solid #d1d5db; border-radius: 0.375rem; }
.day.on, .slot.on {
  border: 0;
  color: #fff;
  box-shadow: 0 7.200px 10.800px -1.800px rgba(0, 0, 0, .1), 0 3.600px 7.200px -3.600px rgba(0, 0, 0, .1);
}
.day.on { background: #16a34a; display: flex; align-items: center; }
.slot.on { background: #9333ea; display: flex; align-items: center; }
.hint { margin-top: 0.250rem; font-size: 0.750rem; line-height: 1rem; color: #6b7280; }
.slots-card h2 { margin-bottom: 0.500rem; }
.lead { margin-bottom: 1rem; color: #4b5563; }
.summary {
  margin-top: 1rem;
  padding: 0.750rem;
  display: flex;
  align-items: center;
  justify-content: space-between;
  border-radius: 0.500rem;
  background: #f9fafb;
  color: #4b5563;
}
.summary b { color: #9333ea; font-weight: 600; }
.summary small { font-size: 0.750rem; color: #6b7280; }
.preview { height: 460px; }
.facts { display: grid; grid-template-columns: repeat(3, 1fr); gap: 1rem; }
.fact {
  padding: 0.750rem;
  display: flex;
  flex-direction: column;
  gap: 0.250rem;
  border-radius: 0.375rem;
  background: #f9fafb;
  color: #374151;
}
.fact b { color: #111827; font-weight: 600; }
.tags { display: flex; gap: 0.500rem; color: #1e40af; font-weight: 500; }
.tags span { padding: 0.250rem 0.500rem; border-radius: 0.250rem; background: #dbeafe; }

/* Desktop strip with the dock */
.desktop {
  position: relative;
  flex: none;
  height: 116px;
  padding: 4px 0 0 64px;
}
.wallpaper { position: absolute; left: 0; top: -16px; width: 2938px; height: 132px; z-index: -1; }
.dock {
  position: relative;
  width: 2809px;
  height: 102px;
  padding: 16px 16px 0;
  display: flex;
  gap: 20.950px;
  border-radius: 28px;
  background: linear-gradient(90deg, #59595b 0, #5c5a5e 4%, #876375 8%, #6b5e6b 12%, #57565a 15%, #57565a 20%, #86646a 25%, #5c5a66 30%, #7a6c95 35%, #b077a6 41%, #b9799f 48%, #c97e90 57%, #d98085 66%, #d8807a 76%, #da8676 83%, #cb7e78 87%, #96697f 93%, #99698a 100%);
  box-shadow: inset 0 0 0 2px rgba(255, 255, 255, .2), 0 0 110px rgba(0, 0, 0, .24);
}
.app { position: relative; flex: none; width: 64px; height: 64px; }
.app svg { display: block; width: 64px; height: auto; overflow: visible; filter: drop-shadow(0 1px 1px rgba(0, 0, 0, .3)); }
.app text { font-family: Inter, "Liberation Sans", sans-serif; }
.app:last-child svg { margin-top: -6px; }
.running::after {
  content: "";
  position: absolute;
  left: 28px;
  top: 74px;
  width: 8px;
  height: 8px;
  border-radius: 4px;
  background: rgba(25, 0, 10, .92);
}
.badge {
  position: absolute;
  right: -10px;
  top: -9px;
  min-width: 32px;
  height: 32px;
  padding: 0 3px;
  border-radius: 16px;
  background: #f43d33;
  color: #fff;
  font-size: 18px;
  line-height: 32px;
  text-align: center;
}
.sep { flex: none; width: 2px; height: 74px; margin: -2px 8px 0; background: rgba(50, 10, 30, .45); }
.sep.last { margin-right: 7px; }
```
